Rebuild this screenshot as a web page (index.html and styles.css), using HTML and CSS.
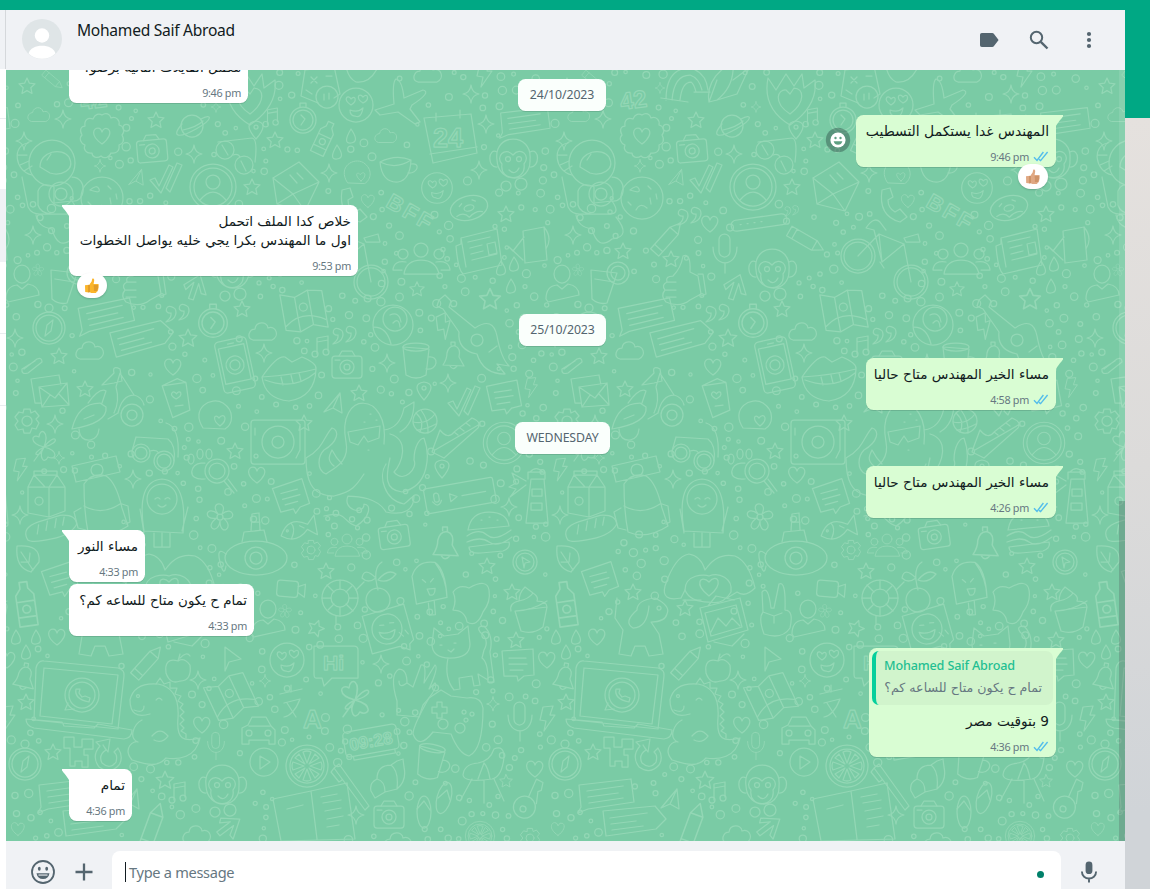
FILE: index.html
```html
<!DOCTYPE html>
<html lang="en">
<head>
<meta charset="utf-8">
<title>Chat</title>
<link rel="stylesheet" href="styles.css">
</head>
<body>
<svg width="0" height="0" class="sprites" aria-hidden="true">
  <defs>
    <symbol id="check2" viewBox="0 0 16 11"><path d="M1 6.2 4 9.4 10.4 1M6 8.4 7.600 9.6 14.6 1" fill="none" stroke="#53bdeb" stroke-width="1.4"/></symbol>
    <symbol id="thumb" viewBox="0 0 16 16"><path d="M5 7.2 7.6 3.6 8.2.9C8.7.2 10.4.6 10.2 2.6L9.6 6h4.2c1.300 0 1.300 1.700.4 2 .9.400.8 1.800-.1 2 .7.500.5 1.700-.4 1.900.4.700 0 1.700-1 1.800-.3 1.300-1.300 1.400-2.600 1.400-2.200 0-3.300-.2-5.100-1.100Z" fill="currentColor"/><path d="M1 7.300 5 6.800v7.800l-3.800-.5Z" fill="currentColor"/><path d="M9.700 8h4.500M9.900 10h4.100M9.900 12h3.600M5 7v7.500" stroke="#a8642b" stroke-width=".7" fill="none" opacity=".85"/></symbol>
    <symbol id="tail" viewBox="0 0 8 13"><path d="M0 0H8V13C5 7 2 4.500 0 1.600Z" fill="currentColor"/></symbol>
    <g id="star"><path d="M0-8 2.400-2.800 8-2.200 3.800 1.700 5 7.500 0 4.600-5 7.500-3.800 1.700-8-2.200-2.400-2.800Z"/></g>
    <g id="spark"><path d="M0-9Q1-1 8 0 1 1 0 9-1 1-8 0-1-1 0-9Z"/></g>
    <g id="heart"><path d="M0 8C-13-1-8-8-4-8Q-1-8 0-4 2-9 6-7C10-4 7 3 0 8Z"/></g>
    <g id="cloud"><path d="M-10 8C-17 6-14-3-8-3-7-11 4-11 5-4 13-7 17 4 9 8Z"/></g>
    <g id="camera"><rect x="-15" y="-9" width="30" height="22" rx="3"/><path d="M-8-9-5-14H5L8-9M-12-5h5"/><circle cy="2" r="7"/><circle cy="2" r="3"/></g>
    <g id="rosette"><path d="M0-21C4-24 8-22 9-18 14-20 18-16 17-11 22-10 23-4 20-1 23 4 21 8 17 9 18 15 14 18 9 17 7 22 2 23-1 20-5 23-10 21-10 17-16 18-19 13-17 9-22 7-23 2-20-1-23-6-21-10-17-10-18-16-14-19-9-17-7-22-3-23 0-21Z"/><path d="M0 8C-13-1-8-8-4-8Q-1-8 0-4 2-9 6-7C10-4 7 3 0 8Z"/></g>
    <g id="planet"><circle r="11"/><path d="M-10-2C-22 12-12 12 4 3 22-7 20-13 9-7M-9 4C0 2 7-1 11-5"/></g>
    <g id="astro"><circle r="23"/><path d="M-12 4C-12-12 10-16 17-6 24 8 8 13-2 10ZM-5-3-1-9M-20 12C-38 8-40-18-24-20M-28 8-20 3M-32 2-23-2M-34-8-25-8M-30 14-24 44Q-20 52-10 51L15 51Q30 52 20 38L2 40V24Q-10 18-14 28V42Q-12 50 0 51M20 14C36 14 34 40 20 38M-16 52Q-14 64 0 66 6 88 20 76 40 74 24 54"/><circle cx="9" cy="31" r="12"/><circle cx="9" cy="31" r="6"/></g>
    <g id="plane"><path d="M-9 8 7-11 9 9 0 4ZM0 4 7-11"/></g>
    <g id="check"><path d="M-17 2-12 0-8 8 2-13 6-11-6 15ZM-1 10 10-15 15-13 3 14Z"/></g>
    <g id="contact"><circle r="23"/><circle r="19"/><circle cy="-5" r="7"/><path d="M-13 13Q0-3 13 13"/></g>
    <g id="glasses"><circle cx="-13" cy="-3" r="9"/><circle cx="6" cy="12" r="9"/><path d="M-20-11 14-15Q20-14 17 9M-5 2Q0 0 2 4M-16-8-10 2M3 8 8 18"/></g>
    <g id="note"><path d="M-5 8V-8L6-10V5M-5-4 6-6"/><circle cx="-7" cy="8" r="3"/><circle cx="4" cy="6" r="3"/></g>
    <g id="pin"><path d="M0 9Q-14-7 0-9 14-7 0 9Z"/><circle cy="-3" r="2"/></g>
    <g id="mail"><path d="M-20-8 6-24 26-4 12 25-16 18ZM-20-8 0 8 26-4M0 8-16 18M0 8 12 25M-3-11 4-3M4-13 10-7"/></g>
    <g id="envelopes"><path d="M14-6 12-16-16-12-12 12-6 12M-8-4 20-8 22 14-5 16ZM-8-4 8 7 20-8M-5 16 3 4M22 14 12 3"/></g>
    <g id="cookie"><circle r="21"/><path d="M-12-8Q-5-14-3-9T-12-8M6-12l3 3M8 0l1 6M14-4l1 5M-6 12Q-2 4 5 10M-14 4l3 3"/></g>
    <g id="bust"><ellipse cy="-11" rx="8" ry="9"/><path d="M-16 14Q-16 1-5 0L0 4 6-1Q17 1 17 10L-14 17Z"/></g>
    <g id="people"><circle cy="-10" r="7"/><circle cx="-18" cy="-6" r="5"/><circle cx="18" cy="-6" r="5"/><path d="M-17 14Q-15 0 0 0T18 14ZM-19 10H-28Q-27 0-15 2M20 10H29Q28 0 15 2"/></g>
    <g id="flower"><circle r="3"/><path d="M-2-3C-12-16 9-17 2-3 14-13 18 6 3 1 16 10 0 21 0 4-2 19-17 10-3 1-18 4-14-13-2-3Z"/></g>
    <g id="drink"><path d="M-14-13 12-10 2 20Q-6 22-13 16ZM-10-4 9-1"/><circle cx="13" cy="-10" r="11"/><circle cx="13" cy="-10" r="7"/></g>
    <g id="hand"><path d="M-16 20Q-22 14-17 8-21 3-15 0-17-6-9-6-1-14 1-26 9-30 8-10L16-6 19 12 8 18Q-2 26-16 20ZM-15 0H-6M-17 8H-6M-16 15H-6M16-8H21L24 12 19 14"/></g>
    <g id="arrow"><path d="M-12 2 1-12 12 6 7 6 2-3 1 14-4 14-3-3-9 6Z"/></g>
    <g id="calc"><path d="M-15-16 14-20 20 8 14 12M-15-16-19 10-2 17M-9-9l6 6M-3-9l-6 6M6-10h6M-14 4l6 4"/><circle cx="7" cy="11" r="11"/><path d="M4 8V14M9 7V13"/></g>
    <g id="lovely"><circle r="17"/><path d="M-5 0C-14-6-8-11-5-6-1-11 2-4-5 0ZM7-2C-1-7 3-13 7-8 12-13 14-5 7-2ZM-6 5Q2 8 7 3 5 14-1 11-6 11-6 5Z"/></g>
    <g id="jet"><path d="M-4-25Q2-24 4-6L23-14Q32-12 12 1L10 5 20 18 15 20-2 8-20 11-25 6-6 0Q-8-22-4-25Z"/></g>
    <g id="watch"><circle r="13"/><circle r="10"/><path d="M-3-13V-17H3V-13M-2-5 2-1-2 5"/></g>
    <g id="bottle"><path d="M-7 17V-7L-3-12V-17H3V-12L7-7V17ZM-7-2H7M-7 10H7"/><circle cy="4" r="3"/></g>
    <g id="calendar"><path d="M-24-20 23-24 29 15-15 25ZM-18 16 29 9M-12-25v8M12-28v8"/><text x="-15" y="9" font-size="27">24</text></g>
    <g id="cup"><path d="M-16-6Q-14 15 2 14 14 12 15-8Q0-14-16-6ZM15-4C25-6 22 6 12 5M-16-6Q0 2 15-8"/></g>
    <g id="monkey"><path d="M-16-2C-20-30 20-30 17-2 18 22-15 22-16-2ZM-16-10C-25-15-26 6-16 5M17-10C27-15 27 6 17 5M0-7C-8-16-18-5-11 2-14 20 14 20 11 2 18-6 8-16 0-7Z"/><circle cx="-5" cy="-3" r="2.500"/><circle cx="6" cy="-3" r="2.500"/><path d="M-4 8Q2 14 6 6"/><circle cx="-7" cy="24" r="5"/><circle cx="8" cy="22" r="6"/></g>
    <g id="donut"><ellipse rx="19" ry="12"/><ellipse rx="5" ry="3"/><path d="M-14 5Q-6 2-2 9 6 4 12 7M-9-4l3-2M5-7l3 2"/></g>
    <g id="paper"><path d="M-18-12 18-21 23 15-16 24Q-21 20-23-4L-18-6ZM-18-12-13 17M-11-8 11-13M-9-2 3-5M-8 4 4 1M-7 10 18 4M8-6 16-8 18 3 10 5Z"/></g>
    <g id="jug"><path d="M-10-12 11-16 14 17-8 20ZM-9-6-20 8-24 4-10 17M11-16Q20-5 13 6"/></g>
    <g id="bike"><circle cx="-26" cy="2" r="17"/><circle cx="-26" cy="2" r="14"/><circle cx="27" cy="28" r="17"/><circle cx="27" cy="28" r="14"/><path d="M-26 2-5-20 20-10-2 8-10-24-18-26Q-10-38-4-32L2-24M-2 8-5-20M20-10 27 28M20-16 34-20 36-12H22ZM-4 8l4 6"/></g>
    <g id="bubble"><path d="M-26-10 26-16 29 7-17 14-27 18-24 12ZM-18-4 18-9M-17 2 13-2M-16 8 18 3"/></g>
    <g id="bubbleR"><path d="M-27-10 25-15 36-2 26 8-24 15ZM-20-3 17-8M-19 3 6 0M-18 9 13 5"/></g>
    <g id="memo"><path d="M-16-12 15-14 16 12 6 13 0 18-1 13-14 13ZM-9-5H8M-9 1H9M-8 7H5"/></g>
    <g id="rainbow"><path d="M-20 12Q-20-20 4-20 20-16 22 2M-14 12Q-12-13 4-13 13-10 16 2M-6 12Q-4-6 5-6 8-4 10 4M-25 10 2 14M8 4 24 4"/></g>
    <g id="rocket"><path d="M-16 16Q-20-8 8-24 10 0-8 14ZM-8 14 12 8 24-18 8-6M-16 16-8-6"/></g>
    <g id="wheart"><path d="M-22-20-14-8-4-24 4-12 12-24 14-10 25-18Q28 8 0 27-28 10-22-20Z"/><path d="M0 16C-18 4-12-9-4-8L0-4 4-10C14-10 16 4 0 16Z"/></g>
    <g id="quotes"><path d="M-4-4C-12-10-15 2-7 1-6 6-10 8-12 10 0 8-1-3-4-4ZM9-6C1-12-2 0 6-1 7 4 3 6 1 8 13 6 12-5 9-6Z"/></g>
    <g id="bar"><rect x="-28" y="-5" width="56" height="11" rx="5"/><path d="M-19 0h1M-12 0h1M-5 0h1M2 0h1"/></g>
    <g id="pencil"><path d="M-19-5H10L20 0 10 6H-19ZM10-5V6M-13-5V6"/></g>
    <g id="mic"><rect x="-6" y="-18" width="11" height="23" rx="5.500"/><path d="M-12-5C-12 16 12 16 12-5M0 11V21"/></g>
    <g id="bolt"><path d="M-4-12 6-13 3-4 8-4-3 12-1 2-7 1Z"/></g>
    <g id="compass"><circle r="16"/><circle r="13"/><circle cy="-20" r="4"/><path d="M-4 8-2-3 4-8 2 3Z"/></g>
    <g id="map"><path d="M-21-20-7-15 7-20 21-17V20L7 15-7 20-21 16ZM-7-15V20M7-20V15M-20 12Q-2-2 20 12"/><circle cy="-4" r="4"/></g>
    <g id="ballrose"><circle r="20"/><circle cx="2" cy="-6" r="12"/><path d="M-19 2Q-6 2-2 19M-3-10Q6-14 8-3M0-2Q6-8 7 2"/></g>
    <g id="guitar"><path d="M-36-38-30-43-24-37-26-31 0-10Q18-22 22-2 26 20 34 28L22 26 30 36Q8 36 2 16-18 12-16-6L-32-29-38-32Z"/><circle cx="2" cy="2" r="6"/><path d="M14 14l8-6"/></g>
    <g id="phone"><rect x="-16" y="-26" width="32" height="52" rx="4"/><rect x="-13" y="-19" width="26" height="36"/><circle r="9"/><circle r="5"/><path d="M-3-22h6"/></g>
    <g id="lips"><path d="M-27 0Q-12-22-4-20L3-15 13-20Q28-14 27-8 26 20 0 24-24 22-27 0ZM-27 0Q5-2 27-8M-24 3Q5 14 26-4M-8 0l2 8M2-2l2 8M10-4l2 8"/></g>
    <g id="mug"><path d="M-13-14-10 14Q0 20 10 14L13-12ZM12-4C24-6 22 10 10 8"/><ellipse cy="-14" rx="13" ry="4"/></g>
    <g id="bell"><path d="M-10 8Q-6 2-6-4-4-12 2-11 8-9 6 0L11 9ZM-2-12V-15H2V-11M-3 9Q0 14 4 9"/></g>
    <g id="clip"><path d="M-9 4 4-6Q9-8 9-3L-5 8Q-12 10-11 4L2-4"/></g>
    <g id="scooter"><path d="M-29 24Q-28 36-18 35-10 34-9 24"/><circle cx="24" cy="10" r="11"/><circle cx="24" cy="10" r="5"/><path d="M-36 24Q-30-2-8-2L-2 2Q0 18-36 24ZM-20-2Q-8-18-2-14L-6-2M10 8Q14-10 26-10 34-8 36 0M10 8 0 14M26-10 12-32 8-18Q12-4 6 8M-6-20 6-32Q4-40 12-36L14-24 6-22Z"/><path d="M-24 14l10-4"/></g>
    <g id="card"><path d="M-12-14 4-19 12-14V14L-6 19ZM-12-14 12-14"/><path d="M0 1C-9-5 0-9 1-4 5-9 9-2 0 1ZM-2 8h8"/></g>
    <g id="ballheart"><path d="M-12 12C-25-8-4-20 8-13 20-5 18 8 10 13Z"/><path d="M5 10C-4 3 0-3 4 2 9-4 14 3 5 10Z"/></g>
    <g id="deck"><rect x="-27" y="-22" width="54" height="44" rx="3"/><circle cy="0" r="16"/><circle r="6"/><path d="M22-16V8l-4 8M-23-14v7"/><circle cx="-22" cy="14" r="2"/></g>
    <g id="squid"><path d="M-18-8C-28-60 26-60 20-6M20-20Q36-22 40-42L50-48Q50-26 36-18M-18-8C-14 12-30 18-38 24-48 20-46 6-40 0-26-8-24-20-32-22-40-14-40-2-58 8-58 28-54 46-30 46-12 42-8 36 0 24 0 8"/><path d="M-30 16C-38 10-34 4-32 0-28 8-26 10-22 14M26-16C46-10 38 14 30 22 40 34 54 18 50 10 50-4 56-12 60-12 66 4 66 36 38 42 20 40 22 26 26 8M22 14C14 26 20 50 40 54 46 50 48 46 50 46 50 60 40 66 22 62 14 48-6 46-16 46-22 60 0 66 0 54 8 54 6 68-8 76-22 72-16 60-40 66-50 54-48 44M-38 46-36 52M-24 46-22 52M44 18 52 20M46 8 52 8"/><path d="M-16-18 16-24 15-12 4-8 0-14-6-5-14-8Z"/><path d="M6-36h1M12-30h1M0-28h1M4 0h1"/></g>
    <g id="basket"><circle r="12"/><path d="M-9-8Q0 0-5 11M-4-11Q4 0 3 12M-12 1Q2 4 10-7M-8 9Q2 8 11 3"/></g>
    <g id="shoe"><path d="M-22 8-16-8Q-8 2-2-6L16-20Q26-16 22-10L-12 20-24 14ZM-21 12 24-14M-2-6l4 3M4-10l4 3M10-15l4 3"/></g>
    <g id="gear"><circle r="5"/><path d="M-3-12H3L4-8 8-10 12-5 9-2 12 2 9 8 5 7 3 12H-3L-4 8-9 9-12 4-9 0-12-4-8-9-4-8Z"/></g>
    <g id="clover"><path d="M0 0C-16-4-12-14-5-10-4-20 6-16 0 0 12-16 18-4 0 0 16 4 12 14 4 10 0 18-6 10 0 0-4 12-16 8 0 0M0 0-10 14"/></g>
    <g id="binocs"><circle cx="-15" cy="6" r="9"/><circle cx="8" cy="14" r="10"/><circle cx="-15" cy="6" r="6"/><circle cx="8" cy="14" r="7"/><path d="M-24 4-20-10 12-8Q20-2 18 14M10-24Q24-20 22 10M-6 4Q0 2 3 6"/></g>
    <g id="paw"><ellipse cx="-18" cy="-8" rx="3" ry="5"/><ellipse cx="-9" cy="-13" rx="3" ry="5"/><ellipse cx="0" cy="-13" rx="3" ry="5"/><path d="M-4 12C-24 14-18-4-8-4L-4-4"/><circle cx="8" cy="4" r="12"/><circle cx="8" cy="4" r="8"/><path d="M15 14l10 12M19 12l9 12"/></g>
    <g id="milk"><path d="M-19-8-13-20H10L18-8V16L2 22-19 18ZM-19-8H18M2-8V22M-13-20-2-8M10-20 2-8M-13-20V-24H10V-20"/><circle cx="-8" cy="6" r="4"/></g>
    <g id="pack"><path d="M-22-16-26-32 18-42 22-26ZM-14-14Q-6-26 8-22 18-16 24 10L30 28Q8 42-10 34-14 14-14-14ZM-14 8Q4 18 22 6M-17 10-24 14-20 30-12 32M24 6 30 8 32 24 28 26"/><circle cx="-1" cy="-28" r="6"/></g>
    <g id="penguin"><path d="M-18 20Q-26-30 0-32 26-30 21 22ZM-18 22-22-2M20 20 26-4M-8 22v14h16V22M0 22v14"/><circle cy="-12" r="15"/><path d="M-7-12q3-3 5 0M3-12q3-3 5 0M-4-6q4 4 8 0"/></g>
    <g id="fish"><path d="M-18 5Q-8-14 10-2L18-10V10L9 3Q-4 16-18 5ZM-6-6Q-2 0-8 9M2-2l4 3"/><circle cx="-11" cy="1" r="1"/></g>
    <g id="voice"><rect x="-35" y="-13" width="70" height="25" rx="2"/><rect x="-26" y="-7" width="5" height="9" rx="2.500"/><path d="M-28 1q5 8 9 0M-10-4v8l7-4ZM2 0H26"/></g>
    <g id="house"><path d="M-10 26-5-18H8L12 26ZM-8-18V-25H9V-18M-6-25Q0-32 7-25M-4-8H6V-1H-4ZM-5 6H6V13H-5ZM-10-16-24-24-20-14-27-10-20-8-26 0-10-12"/></g>
    <g id="burger"><path d="M-21-4Q-18-22 0-22T20-8ZM-22 2Q-10-6-2 1T22-4M-22 8Q-8 2 0 8T23 3M-20 13Q-20 20-8 19L14 17Q22 14 20 8ZM-8-14h1M0-17h1M8-14h1"/></g>
    <g id="sub"><ellipse rx="31" ry="17"/><circle r="11"/><circle r="6"/><path d="M-14-16-12-26 8-28 11-16M-5-27-4-44 3-45 4-28M-4-36H4M-30-4Q-40-12-36 4T-30 8"/></g>
    <g id="bread"><path d="M-24 8Q-30-4-12-9L10-14Q26-14 26-4 20 6 0 9T-24 8ZM-12-6l-2 9M-3-9l-2 9M6-11l-2 9M14-12l-2 8"/></g>
    <g id="leaf"><path d="M-10-12Q14-14 12 4L4 14Q-12 10-10-12ZM-6-6 6 12M2 4 3-5M2 4-6 4"/></g>
    <g id="cursor"><path d="M-6-12 10 0-2 3-6 12Z"/></g>
    <g id="click"><circle r="12"/><circle r="9"/><path d="M-3-5 5 0 0 1-1 6Z"/></g>
    <g id="video"><rect x="-14" y="-8" width="21" height="16" rx="3"/><path d="M7-3 14-6V7L7 3"/></g>
    <g id="buoy"><circle r="18"/><circle r="9"/><path d="M-18 0-9 0M9 0 18 0M0-18V-9M0 9V18M-13-13-6-6M13 13 6 6M12-12 6-6M-12 12-6 6M16-8 24-16M-4 18V26"/></g>
    <g id="cherry"><circle cy="12" r="12"/><path d="M0 2Q-6-20 4-26M0-8Q10-20 18-14 10-4 0-8M-2-10Q-14-22-16-10-10-4-2-10"/></g>
    <g id="pop"><path d="M-14 16-16-12Q-10-28 8-24 18-16 17 12ZM-2 16V28H4V14M8-24Q18-8 17 12M-6-8l3 3M5-8 2-5M-2 2H6Q5 10 0 8Z"/></g>
    <g id="blob"><path d="M-18-10Q-12-18-2-14 16-24 18-12 20 0 12 10 6 26-4 20-6 8-18 8-14-2-18-10Z"/></g>
    <g id="cupcake"><path d="M-14 0-8 20Q4 24 14 16L18-4ZM-18 0Q-20-8-10-10-10-18-4-24 4-18 4-18 10-14 8-10 18-10 18-4M-10-10Q0-12 4-18M-14 0Q2 0 18-10"/></g>
    <g id="sticker"><path d="M-24-14 18-24 26 12 22 16 22 22 12 18-16 24ZM12 4l4 4M18 2l3 4"/><circle r="15"/><path d="M-7-4h4M3-6h4M-8 3Q0 6 8 1 6 12 0 10-6 10-8 3Z"/></g>
    <g id="cat"><path d="M-28-18-26-34-16-26-2-28 8-36 10-18Q10-4-10-4-28-4-28-18ZM-12-4Q-16 16-6 28L0 27-1 16 12 14 14 24 20 23 18 12 28 18Q28 0 22-4L24-12Q30-22 20-30 16-36 24-36 34-26 30-10L34 20 28 20M-20-17h2M-6-19h2M-12-12l3 2 3-3"/></g>
    <g id="dog"><path d="M-4-22Q-4-32 14-34 30-26 26-18 24-10 10-10L18 2 22 22 8 24 4 14-6 14-10 24-22 22-18-2-26-14-24-34M-4-22Q-18-10-8-4 6-4 8-26"/><circle cx="18" cy="-24" r="2"/></g>
    <g id="picture"><path d="M-24-14 16-24 24 8-16 20ZM-19-9 12-17 18 5-13 14ZM-13 10 -6-4 2 4 8-4 16 4M-16-16-8-26 10-22M20 12 8 24-10 20"/><circle cx="10" cy="-11" r="3"/></g>
    <g id="peace"><path d="M-12 20Q-18 4-13-2L-14-22Q-8-30-5-6L-2-6 3-30Q10-34 9-4 18-4 14 14 6 26-12 20ZM-13-2-2 2 6-1M-2 2V9"/></g>
    <g id="hug"><path d="M-28 20Q-48 24-44 8-34-22-20-24-8-22-4-8 8-26 26-22 40-16 46 10 36 20 28 14L18 20M-28 20-24 12M-26 22H-8M0 18C-16 6-8-4 0 4 8-6 16 6 0 18Z"/><path d="M-24 12C-24-4-4-4 0-2 10-6 24 0 22 14 16 24 8 26 0 24-10 24-20 22-24 12Z"/></g>
    <g id="apple"><path d="M0-8Q-14-12-12 4-8 16 2 12 14 12 12-4 6-12 0-8ZM0-8 2-15M2-11Q9-18 12-13"/></g>
    <g id="hi"><path d="M-22-18H18Q22-18 22-14V14H-4L-12 22-14 14H-20Q-22 14-22 10Z"/><text x="-13" y="6" font-size="21">Hi</text></g>
    <g id="laptop"><path d="M-46-34Q-44-42-38-41L36-34Q43-32 42-26L36 27-48 18ZM-38-34 36-27 30 22-42 14ZM-56 17-20 20-18 24 12 26 16 22 50 28Q50 36 42 37L-48 26Q-56 24-56 17Z"/><circle cx="0" cy="-7" r="17"/><circle cx="0" cy="-7" r="13"/><path d="M-14 1-17 8-8 7M-6-13Q-8-3 7 0L8-4 3-6 0-5-3-9-2-13Z"/></g>
    <g id="dino"><path d="M-2-8Q-22-2-22-22-18-40 6-38 28-34 26-4C24 18 32 20 48 16 44 36 26 38 14 36 4 48-12 40-20 38-30 26-18 18-14 20-24 16-18 2-10-2M-18-12Q-8-8-8-16M0 14Q8 4 16 14 10 22 2 18M4-22q3-4 6 0"/><path d="M4-38 8-44 12-38 18-40 18-34 25-34 23-28 29-26 26-21 31-18 28-14 32-10 28-6 32-2 28 2 32 6 29 9 34 12 34 16"/><circle cx="-14" cy="-26" r="1.500"/></g>
    <g id="lang"><path d="M-20-15 2-20M-9-24V-17M-16-6 0-10Q-6 6-16 8M-13-6-4 8"/><text x="3" y="19" font-size="26">A</text></g>
    <g id="okhand"><path d="M-14 28-14 14Q-22-12-12-18-4-18-4-4L2 0 10-22Q16-24 13-4L24-22Q28-20 18 2L24-4Q28 0 12 18L8 30ZM-4-4Q-12 2-12-6"/></g>
    <g id="pad"><path d="M-22-26-10-34 0-28 16-26Q30-28 32-16 32 26 18 32 8 30 0 10L-18 8Q-32 26-38 10-38 2-22-26ZM-14-22H-9V-17H-4V-11H-9V-6H-14V-11H-19V-17H-14Z"/><circle cx="-8" cy="0" r="5"/><circle cx="9" cy="4" r="5"/><circle cx="13" cy="-12" r="2"/><circle cx="21" cy="-10" r="2"/><circle cx="15" cy="-4" r="2"/></g>
    <g id="car"><path d="M-16 14V-2L-10-5-6-13H8L13-4 17 0V14H11V10H-9V14ZM-9-4H12"/><circle cx="-9" cy="3" r="3"/><circle cx="10" cy="3" r="3"/></g>
    <g id="clock"><rect x="-27" y="-13" width="54" height="25" rx="4"/><path d="M-20 12v4H22V12"/><text x="-22" y="6" font-size="17">09:28</text></g>
    <g id="play"><circle r="14"/><path d="M-4-6 6 0-4 7Z"/></g>
    <g id="citrus"><circle r="21"/><circle r="17"/><path d="M0-3-4-14Q0-16 4-14ZM0 3-4 14Q0 16 4 14ZM-3 0-14-4Q-16 0-14 4ZM3 0 14-4Q16 0 14 4ZM-2-2-12-8-8-12ZM2-2 12-8 8-12ZM2 2 12 8 8 12ZM-2 2-12 8-8 12Z"/></g>
    <g id="pixel"><path d="M-14-16H-4V-6H4V-14H15V-4H6V2H10V14H4V8H-3V13H-8V-5H-14Z"/></g>
    <g id="reload"><path d="M-5-12-2-7Q-10-2-6 6 2 13 8 5 10-2 6-5L10-9Q16 0 11 8 2 18-9 10-17-1-8-11L-12-15 2-18 0-5Z"/></g>
    <g id="brush"><path d="M-17-20-12-24 18 18 14 22ZM-17-20-20-16-12-6-9-8"/></g>
    <g id="croissant"><path d="M-18 12Q-20 4-12 0-12-14 2-14L8-18 14-20 15-12Q18 2 8 10L-4 13-14 19ZM-12 0Q-4 2-4 13M2-14Q10-8 8 10"/></g>
    <g id="chair"><path d="M-21 2Q-20-9-6-10 6-12 10-24 20-28 20-16 18 4 8 6-20 10-21 2ZM-12 6-24 28M0 7V30M10 6 20 28M-6 6 0-10M6 6Q4-6 0-10"/></g>
    <g id="key"><circle cx="-3" cy="8" r="11"/><circle cx="-4" cy="10" r="3"/><path d="M-1-3 3-22 10-20 10-12 7-10 8 2"/></g>
    <g id="flops"><ellipse cx="-9" cy="6" rx="7" ry="16"/><ellipse cx="11" cy="-8" rx="7" ry="16" transform="rotate(15 11 -8)"/><path d="M-16 3-9-5-3 4M5-8 14-16 17-6"/></g>
    <g id="book"><path d="M-38-16 0-24 36-32 44 24-30 26ZM0-24 6 24M-24-6-8-10M10-18 26-21M12-12 30-15M14-4 30-7M16 4 32 1M16 12 28 10"/></g>
    <g id="drop"><path d="M0-7Q9 6 0 7T0-7Z"/></g>
    <g id="handset"><path d="M-10-14Q-14 12 8 18L15 13 8 5 3 8Q-4 4-4-4L1-7-2-16Z"/></g>
    <g id="bff"><text x="-24" y="7" font-size="22" letter-spacing="3">BFF</text></g>
    <g id="n42"><text x="-15" y="8" font-size="24">42</text></g>
    <g id="watermelon"><path d="M-18-6Q0-4 16-10 8 12-8 10-16 6-18-6ZM-18-6Q0-16 16-10"/></g>
  </defs>
</svg>

<div class="page">
  <div class="sidebar">
    <div class="side-head"></div>
    <div class="side-row"></div>
    <div class="side-row tall"></div>
    <div class="side-row active"></div>
    <div class="side-row"></div>
    <div class="side-row"></div>
  </div>
  <main class="panel">
    <header class="head">
      <svg class="avatar" viewBox="0 0 40 40"><circle cx="20" cy="20" r="20" fill="#dfe5e7"/><circle cx="20" cy="16.500" r="7.200" fill="#fff"/><path d="M6.500 34.600C9 24 31 24 33.500 34.600A20 20 0 0 1 6.500 34.600Z" fill="#fff"/></svg>
      <div class="name">Mohamed Saif Abroad</div>
      <div class="tools">
        <svg viewBox="0 0 24 24"><path d="M4.800 5H15.200Q16.400 5 17 5.900L21.600 12 17 18.100Q16.400 19 15.200 19H4.800Q3 19 3 17.200V6.800Q3 5 4.800 5Z" fill="#54656f"/></svg>
        <svg viewBox="0 0 24 24"><circle cx="9.500" cy="9.500" r="5.700" fill="none" stroke="#54656f" stroke-width="2"/><path d="M13.800 13.800 20.500 20.500" stroke="#54656f" stroke-width="2.400"/></svg>
        <svg viewBox="0 0 24 24" fill="#54656f"><circle cx="12" cy="6" r="2.100"/><circle cx="12" cy="12" r="2.100"/><circle cx="12" cy="18" r="2.100"/></svg>
      </div>
    </header>

    <section class="chat">
      <svg class="wall" id="wall" width="1119" height="771" viewBox="6 70 1119 771" aria-hidden="true"></svg>
      <div class="date floating">24/10/2023</div>
      <div class="list">
        <div class="msg in w179 first"><p class="ar" dir="rtl">هكمل الفايلات التانيه برضو؟</p><div class="meta">9:46 pm</div></div>
        <div class="msg out w200 tailed gap">
          <svg class="tail"><use href="#tail"/></svg>
          <svg class="react-btn" viewBox="0 0 26 26"><circle cx="13" cy="13" r="12.200" fill="#0b141a" opacity=".3"/><circle cx="13" cy="13" r="7.600" fill="#fff"/><g fill="#5f9f82"><circle cx="10.500" cy="11" r="1.200"/><circle cx="15.500" cy="11" r="1.200"/><path d="M8.600 14.200H17.400Q16.400 17.800 13 17.800T8.600 14.200Z"/></g></svg>
          <p class="ar a-wide" dir="rtl">المهندس غدا يستكمل التسطيب</p><div class="meta">9:46 pm<svg class="tick"><use href="#check2"/></svg></div>
          <div class="reaction tan"><svg><use href="#thumb"/></svg></div>
        </div>
        <div class="msg in w289 tailed after-reaction">
          <svg class="tail"><use href="#tail"/></svg>
          <p class="ar" dir="rtl">خلاص كدا الملف اتحمل<br>اول ما المهندس بكرا يجي خليه يواصل الخطوات</p><div class="meta">9:53 pm</div>
          <div class="reaction yellow"><svg><use href="#thumb"/></svg></div>
        </div>
        <div class="date after-reaction">25/10/2023</div>
        <div class="msg out w190 tailed gap"><svg class="tail"><use href="#tail"/></svg><p class="ar" dir="rtl">مساء الخير المهندس متاح حاليا</p><div class="meta">4:58 pm<svg class="tick"><use href="#check2"/></svg></div></div>
        <div class="date wide gap">WEDNESDAY</div>
        <div class="msg out w190 tailed gap"><svg class="tail"><use href="#tail"/></svg><p class="ar" dir="rtl">مساء الخير المهندس متاح حاليا</p><div class="meta">4:26 pm<svg class="tick"><use href="#check2"/></svg></div></div>
        <div class="msg in w76 tailed gap"><svg class="tail"><use href="#tail"/></svg><p class="ar" dir="rtl">مساء النور</p><div class="meta">4:33 pm</div></div>
        <div class="msg in w185 tight"><p class="ar a-narrow" dir="rtl">تمام ح يكون متاح للساعه كم؟</p><div class="meta">4:33 pm</div></div>
        <div class="msg out w187 tailed gap quoted"><svg class="tail"><use href="#tail"/></svg>
          <div class="quote"><b>Mohamed Saif Abroad</b><p class="ar" dir="rtl">تمام ح يكون متاح للساعه كم؟</p></div>
          <p class="ar" dir="rtl">9 بتوقيت مصر</p><div class="meta">4:36 pm<svg class="tick"><use href="#check2"/></svg></div></div>
        <div class="msg in w63 tailed gap"><svg class="tail"><use href="#tail"/></svg><p class="ar" dir="rtl">تمام</p><div class="meta">4:36 pm</div></div>
      </div>
      <div class="track"><div class="thumb"></div></div>
    </section>

    <footer class="composer">
      <svg class="smile" viewBox="0 0 26 26"><circle cx="13" cy="13" r="11" fill="none" stroke="#54656f" stroke-width="1.800"/><ellipse cx="9.300" cy="9.800" rx="1.400" ry="2" fill="#54656f"/><ellipse cx="16.700" cy="9.800" rx="1.400" ry="2" fill="#54656f"/><path d="M6.500 14.200H19.500Q18.500 20 13 20T6.500 14.200Z" fill="#54656f"/><path d="M8.500 15.500H17.500V16.600H8.500Z" fill="#f0f2f5"/></svg>
      <svg class="plus" viewBox="0 0 24 24"><path d="M12 3.500V20.500M3.500 12H20.500" stroke="#54656f" stroke-width="2.300"/></svg>
      <div class="input"><i class="caret"></i><span class="ph">Type a message</span><i class="dot"></i></div>
      <svg class="mike" viewBox="0 0 24 24"><rect x="8.600" y="1.500" width="6.800" height="12.600" rx="3.400" fill="#54656f"/><path d="M4.900 11.500C4.900 20.800 19.100 20.800 19.100 11.500M12 18V22.500" fill="none" stroke="#54656f" stroke-width="1.900"/></svg>
    </footer>
  </main>
  <aside class="backdrop"></aside>
</div>
<script src="wallpaper.js"></script>
</body>
</html>
```
FILE: wallpaper.js
```js
// Doodle wallpaper: one 540px wide tile, repeated across the conversation.
// Each entry is: shape, x, y, rotation, scale.
const items = [
  ['star',27,86],['pencil',53,80,40,.6],['cloud',39,115,0,.8],['spark',63,119],['spark',24,141],['rosette',102,136],
  ['star',156,120],['planet',192,126],['camera',152,149,-5],['spark',194,154],['astro',52,163],['spark',100,166,0,.7],
  ['plane',136,178,0,.8],['check',167,178],['contact',213,187],['glasses',238,153],['note',272,117,0,.9],['wheart',250,98],
  ['pin',256,130],['star',275,140],['cookie',102,198],['star',252,187],['n42',95,100,-8],['rainbow',146,88],['rocket',185,86],
  ['spark',120,88,0,.6],['spark',216,107,0,.6],
  ['spark',33,235],['quotes',150,215],['heart',170,224],['bar',219,222,-8],['pencil',127,238,-48],['mic',185,252],
  ['pencil',266,240,30],['monkey',232,272],['star',131,259],['star',83,251],['bust',22,285],['flower',38,270,0,.45],
  ['drink',65,283],['hand',142,282],['arrow',196,286,15],['quotes',252,210,0,.6],
  ['calc',320,86],['watermelon',364,72],['cloud',428,74],['lovely',356,105],['jet',400,104],['watch',303,120],
  ['bottle',324,138,25],['calendar',448,138],['cup',396,168],['lovely',437,188,0,.9],['monkey',513,162],['heart',368,201,0,.8],
  ['bff',409,212,30],['donut',469,208,-15],['star',506,214],['paper',479,250],['jug',533,243],['people',421,260],
  ['bike',344,254],['bubble',524,122,0,.9],['star',417,289,0,.9],['star',490,299,0,1.3],['bolt',484,75],['spark',471,94],
  ['spark',479,170],['spark',329,173],['spark',486,124],['handset',352,204],['mail',293,186],['ballheart',357,173,0,.8],
  ['cloud',386,136,0,.8],['drop',351,136],['drop',337,152],['drop',501,268],['drop',511,286],['drop',514,264],
  ['compass',49,328],['bubble',105,316,-5],['bubbleR',138,339,-8],['quotes',178,312],['watch',213,323,0,1.1],
  ['star',242,309],['star',188,338,0,1.1],['star',59,356],['star',85,389],['star',359,393],['star',304,423],['star',235,451],
  ['cloud',263,332],['cloud',90,351],['map',304,311,-10],['ballrose',393,325],['quotes',345,334],['bolt',444,327,-20],
  ['bolt',531,388,0,.8],['bolt',20,470,0,.9],['guitar',475,338],['phone',235,365,-12],['lips',289,377],['camera',347,365],
  ['mug',416,361],['bell',453,357],['note',322,346],['clip',33,365],['envelopes',47,391],['scooter',108,405],
  ['card',176,398,-8],['heart',173,367],['ballheart',215,416],['deck',278,442],['plane',333,404],['squid',364,450],
  ['basket',425,421],['check',465,401],['memo',504,396,-8],['shoe',456,438],['contact',504,443,0,.9],['gear',27,421],
  ['spark',55,424],['spark',264,353],['spark',387,363],['spark',448,383],['spark',133,479],['spark',20,515],['spark',509,507],
  ['spark',59,458,0,.7],['spark',15,338],['clover',44,447],['binocs',156,447],['paw',209,467],['heart',257,475],
  ['milk',47,495],['pack',98,498],['penguin',162,511],['flower',220,517],['memo',291,496,-15],['fish',298,528,-10],
  ['voice',460,496,-10],['house',536,497],['burger',489,534],['camera',394,535,-8],['people',347,546,0,.7],['bell',445,545,0,1.2],
  ['sub',256,558],['gear',311,550,0,.8],['bread',51,530,-4],['star',487,566],['leaf',27,558],['pin',424,391],['pin',442,469],
  ['click',525,562],
  ['video',291,589,5],['star',326,571],['buoy',340,598],['cherry',378,588],['pop',429,587,-5],['blob',471,602],
  ['cupcake',529,611],['bottle',26,604,-8,1.3],['bust',268,620],['flower',285,611,0,.5],['star',316,628,20],['star',516,640],
  ['star',512,592],['sticker',387,629,-3],['cat',460,662],['memo',518,663],['heart',7,660],['heart',57,637],['drop',16,637],['drop',36,637],
  ['drop',26,652],['dog',101,632],['picture',184,622],['peace',236,614],['hug',169,578],['memo',60,579,-15],['star',93,592],
  ['star',145,608],['pencil',147,662,-48],['apple',178,669],['cursor',231,659],['lovely',287,660],['hi',336,664],['laptop',82,702],
  ['dino',152,722],['map',231,697,-25],['lang',300,709],['clover',355,700,0,1.2],['okhand',411,687],['pad',451,724],
  ['mic',520,720],['bolt',7,719],['bell',24,678,10],['star',26,702],['car',258,730],['heart',202,725],['mic',216,745,0,.7],
  ['clock',371,741,-10],['play',264,762],['citrus',307,766],['compass',25,764],['pixel',78,753],['reload',108,757],
  ['star',53,752],['star',165,780,0,1.1],['monkey',222,788],['brush',351,788],['croissant',389,779],['mug',430,762,10],
  ['chair',484,773],['key',529,800,12],['heart',535,769],['bubble',65,795],['bubbleR',90,821],['book',311,815],['camera',389,815],
  ['flops',433,806],['plane',130,800],['note',179,792],['pencil',152,826,-70,1.2],['arrow',230,826,50],['spark',356,815],
  ['heart',18,829,0,.8],['star',506,781,0,.8],['spark',381,664],['spark',198,680],['spark',265,681,0,.7],['spark',493,704,0,.8],
  ['citrus',480,836,0,.7],['gear',530,838,0,.8],['cloud',197,835],['cloud',398,842]
];
const radius = {astro:34,bike:36,squid:54,laptop:46,dino:38,guitar:30,scooter:34,hug:34,pad:32,calendar:29,book:36,voice:28,
  pack:30,penguin:28,lips:24,deck:30,sub:30,cat:28,dog:28,monkey:24,wheart:25,contact:24,mail:26,bubble:25,bubbleR:27,
  star:10,spark:9,heart:10,drop:6,pin:8,bolt:10,note:10,quotes:11,clip:10,plane:11};

const NS = 'http://www.w3.org/2000/svg';
const make = (name, attrs, parent) => {
  const el = document.createElementNS(NS, name);
  for (const key in attrs) el.setAttribute(key, attrs[key]);
  parent.appendChild(el);
  return el;
};

const wall = document.getElementById('wall');
const tile = make('g', {id: 'tile'}, wall);
const taken = [];
for (const [shape, x, y, turn = 0, size = 1] of items) {
  make('use', {href: '#' + shape, transform: `translate(${x} ${y}) rotate(${turn}) scale(${size})`}, tile);
  taken.push([x, y, (radius[shape] || 19) * size]);
}

// Small bubbles fill whatever space the doodles leave free.
let seed = 11;
const random = () => (seed = (seed * 16807) % 2147483647) / 2147483647;
for (let n = 0; n < 9000; n++) {
  const x = 6 + random() * 540, y = 72 + random() * 768, r = 1.600 + random() * 2.600;
  const free = taken.every(([a, b, c]) => {
    const dx = Math.min(Math.abs(a - x), 540 - Math.abs(a - x));
    return Math.hypot(dx, b - y) > c + r + 2.500;
  });
  if (!free) continue;
  make('circle', {cx: x.toFixed(1), cy: y.toFixed(1), r: r.toFixed(1)}, tile);
  taken.push([x, y, r + 2.500]);
}
for (const dx of [-540, 540, 1080]) make('use', {href: '#tile', x: dx}, wall);
```
FILE: styles.css
```css
* { box-sizing: border-box; }
body { margin: 0; height: 889px; overflow: hidden; background: #00a884; font-family: "Noto Sans", "Open Sans", "DejaVu Sans", sans-serif; }
p { margin: 0; }
.sprites { position: absolute; }
.page { display: grid; grid-template-columns: 6px 1119px 25px; height: 889px; padding-top: 10px; }

.sidebar { background: #fff; overflow: hidden; }
.side-head { height: 59px; background: #f0f2f5; border-right: 1px solid #d5d8db; }
.side-row { height: 72px; border-bottom: 1px solid #e9edef; }
.side-head + .side-row { height: 50px; }
.side-row.tall { height: 70px; border: 0; }
.side-row.active { height: 73px; background: #f0f2f5; border: 0; }
.backdrop { margin-top: 108px; background: linear-gradient(#e5e1de, #dcdbda 45%, #d0d4d8 90%); }

.panel { display: flex; flex-direction: column; height: 879px; }
.head { display: flex; flex: none; height: 60px; padding: 9px 24px 0 16px; background: #f0f2f5; }
.avatar { width: 40px; height: 40px; flex: none; }
.name { margin-left: 15px; font-size: 15.600px; letter-spacing: -.28px; line-height: 23px; color: #111b21; white-space: nowrap; }
.tools { display: flex; gap: 26px; margin: 9px 0 0 auto; }
.tools svg { width: 24px; height: 24px; }

.chat { position: relative; flex: none; height: 771px; overflow: hidden; background: #7acba5; }
.wall { position: absolute; inset: 0; fill: none; stroke: #93d7b5; stroke-width: 1.25; stroke-linejoin: round; stroke-linecap: round; font-family: "Liberation Sans", sans-serif; font-weight: bold; }
.wall text { stroke-width: 1; }
.list { position: relative; display: flex; flex-direction: column; padding: 0 69px 0 63px; margin-top: -19px; }
.gap { margin-top: 12px; }
.tight { margin-top: 2px; }
.after-reaction { margin-top: 38px; }

.msg { position: relative; height: 52px; padding: 7px 7px 0 9px; border-radius: 7.500px; background: #fff; box-shadow: 0 1px .5px rgba(11,20,26,.13); }
.msg.in { align-self: flex-start; }
.msg.out { align-self: flex-end; background: #d9fdd3; }
.in.tailed { border-top-left-radius: 0; }
.out.tailed { border-top-right-radius: 0; }
.w289 { width: 289px; height: 71px; }
.w200 { width: 200px; }
.w190 { width: 190px; }
.w187 { width: 187px; }
.w185 { width: 185px; }
.w179 { width: 179px; }
.w76 { width: 76px; }
.w63 { width: 63px; }
.tail { position: absolute; top: 0; left: -7px; width: 8px; height: 13px; color: #fff; }
.out .tail { left: auto; right: -7px; color: #d9fdd3; transform: scaleX(-1); }
.ar { font-family: "DejaVu Sans", sans-serif; font-size: 13.650px; line-height: 19px; color: #111b21; white-space: nowrap; }
.a-wide { font-size: 13.900px; }
.a-narrow { font-size: 13.400px; }
.meta { position: absolute; right: 7px; bottom: 3px; display: flex; align-items: center; font-size: 10.800px; letter-spacing: -.3px; line-height: 15px; color: #667781; white-space: nowrap; }
.tick { width: 16px; height: 11px; margin-left: 4px; }

.reaction { position: absolute; bottom: -22px; left: 8px; display: grid; place-items: center; width: 30px; height: 25px; border-radius: 13px; background: #fff; box-shadow: 0 1px 2px rgba(11,20,26,.18); }
.out .reaction { left: auto; right: 8px; }
.reaction svg { width: 16px; height: 16px; }
.yellow { color: #fbb52b; }
.tan { color: #e0a883; }
.react-btn { position: absolute; left: -31px; top: 12px; width: 26px; height: 26px; }

.quoted { height: 109px; }
.quote { height: 54px; margin: -4px -4px 7px -4px; padding: 4px 11px 0 8px; border-left: 4px solid #06cf9c; border-radius: 7px; background: #d1f4cc; }
.quote b { display: block; font-size: 12.600px; letter-spacing: -.15px; line-height: 22px; font-weight: 500; color: #1fbf92; white-space: nowrap; }
.quote .ar { font-size: 12.600px; line-height: 22px; color: #667781; }
.quoted { padding-left: 7px; }

.date { align-self: center; width: 87px; height: 32px; border-radius: 7.500px; background: #fafffc; box-shadow: 0 1px .5px rgba(11,20,26,.13); font-size: 12.300px; letter-spacing: -.1px; line-height: 32px; text-align: center; color: #54656f; }
.date.wide { width: 95px; }
.floating { position: absolute; z-index: 2; left: 512px; top: 9px; width: 88px; margin: 0; }
.track { position: absolute; top: 0; right: 0; bottom: 0; width: 6px; padding-top: 431px; background: rgba(255,255,255,.1); }
.thumb { height: 340px; background: rgba(11,20,26,.2); }

.composer { display: flex; flex: 1; align-items: flex-start; padding-top: 10px; background: #f0f2f5; }
.smile { width: 26px; height: 26px; margin: 8px 0 0 24px; }
.plus { width: 24px; height: 24px; margin: 9px 16px 0 16px; }
.input { position: relative; display: flex; width: 949px; height: 50px; padding: 11px 0 0 13px; border-radius: 8px; background: #fff; }
.caret { width: 1px; height: 20px; background: #111b21; }
.ph { margin-left: 3px; font-size: 14.600px; letter-spacing: -.3px; line-height: 21px; color: #667781; }
.dot { width: 7px; height: 7px; margin: 9px 17px 0 auto; border-radius: 50%; background: #00806a; }
.mike { width: 24px; height: 24px; margin: 9px 0 0 16px; }
```
